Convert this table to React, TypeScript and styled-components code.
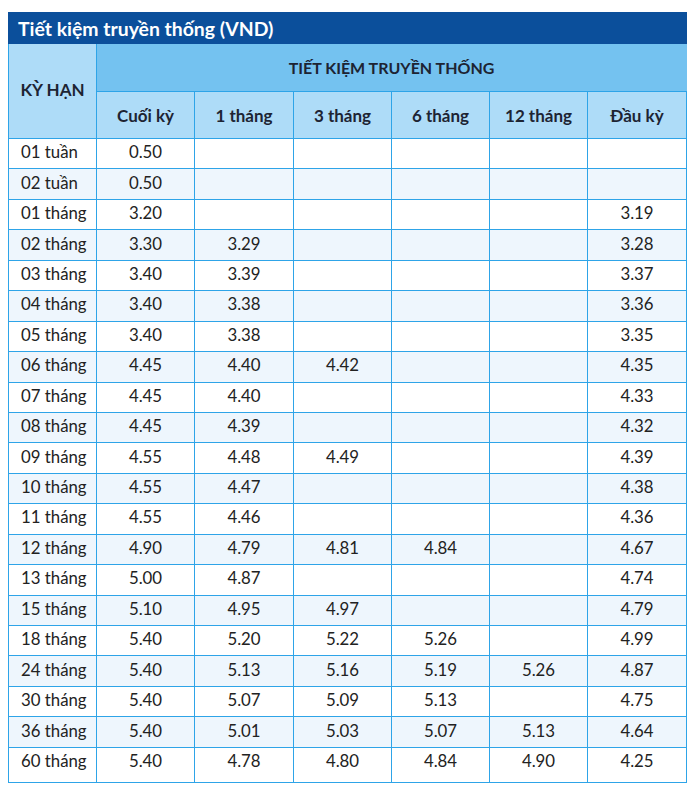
import React from "react";
import styled, { createGlobalStyle } from "styled-components";

const Global = createGlobalStyle`
  html, body { margin: 0; padding: 0; background: #ffffff; }
  body { font-family: "Lato", "Noto Sans", sans-serif; color: #222; }
`;

const Page = styled.div`
  padding: 12px 14px 12px 8px;
`;

const Table = styled.table`
  width: 678px;
  border-collapse: collapse;
  table-layout: fixed;
`;

const TitleCell = styled.th`
  background: #0b4f9b;
  color: #fff;
  font-size: 19.4px;
  font-weight: 700;
  text-align: left;
  height: 30px;
  padding: 0 0 0 9px;
  border: 1px solid #0b4f9b;
`;

const HeadCell = styled.th<{ $tone: "dark" | "light"; $shift?: number }>`
  background: ${(p) => (p.$tone === "dark" ? "#74c2f0" : "#aedcf8")};
  color: #1d2433;
  font-size: ${(p) => (p.$tone === "dark" ? "16px" : "17px")};
  font-weight: 700;
  text-align: center;
  padding: 0 0 ${(p) => p.$shift ?? 0}px;
  border: 1px solid #2ea4e8;
  ${(p) => (p.$tone === "dark" ? "border-top-color: #74c2f0; border-right-color: #74c2f0;" : "")}
`;

const HeadRow = styled.tr<{ $h: number }>`
  height: ${(p) => p.$h}px;
`;

const BodyRow = styled.tr<{ $alt: boolean; $last: boolean }>`
  height: ${(p) => (p.$last ? 35 : 30.45)}px;
  background: ${(p) => (p.$alt ? "#eef6fd" : "#ffffff")};
`;

const Cell = styled.td<{ $first?: boolean; $last?: boolean }>`
  border: 1px solid #2ea4e8;
  font-size: 16.8px;
  color: #222;
  padding: ${(p) => (p.$last ? "0 0 8px" : "0 0 4px")};
  text-align: ${(p) => (p.$first ? "left" : "center")};
  padding-left: ${(p) => (p.$first ? "12px" : "0")};
  vertical-align: middle;
  white-space: nowrap;
`;

const cols = [88, 98, 99, 98, 98, 98, 99];

const rows: [string, string[]][] = [
  ["01 tuần", ["0.50", "", "", "", "", ""]],
  ["02 tuần", ["0.50", "", "", "", "", ""]],
  ["01 tháng", ["3.20", "", "", "", "", "3.19"]],
  ["02 tháng", ["3.30", "3.29", "", "", "", "3.28"]],
  ["03 tháng", ["3.40", "3.39", "", "", "", "3.37"]],
  ["04 tháng", ["3.40", "3.38", "", "", "", "3.36"]],
  ["05 tháng", ["3.40", "3.38", "", "", "", "3.35"]],
  ["06 tháng", ["4.45", "4.40", "4.42", "", "", "4.35"]],
  ["07 tháng", ["4.45", "4.40", "", "", "", "4.33"]],
  ["08 tháng", ["4.45", "4.39", "", "", "", "4.32"]],
  ["09 tháng", ["4.55", "4.48", "4.49", "", "", "4.39"]],
  ["10 tháng", ["4.55", "4.47", "", "", "", "4.38"]],
  ["11 tháng", ["4.55", "4.46", "", "", "", "4.36"]],
  ["12 tháng", ["4.90", "4.79", "4.81", "4.84", "", "4.67"]],
  ["13 tháng", ["5.00", "4.87", "", "", "", "4.74"]],
  ["15 tháng", ["5.10", "4.95", "4.97", "", "", "4.79"]],
  ["18 tháng", ["5.40", "5.20", "5.22", "5.26", "", "4.99"]],
  ["24 tháng", ["5.40", "5.13", "5.16", "5.19", "5.26", "4.87"]],
  ["30 tháng", ["5.40", "5.07", "5.09", "5.13", "", "4.75"]],
  ["36 tháng", ["5.40", "5.01", "5.03", "5.07", "5.13", "4.64"]],
  ["60 tháng", ["5.40", "4.78", "4.80", "4.84", "4.90", "4.25"]],
];

const subHeads = ["Cuối kỳ", "1 tháng", "3 tháng", "6 tháng", "12 tháng", "Đầu kỳ"];

export default function App() {
  return (
    <Page>
      <Global />
      <Table>
        <colgroup>
          {cols.map((w, i) => (
            <col key={i} style={{ width: w }} />
          ))}
        </colgroup>
        <thead>
          <tr>
            <TitleCell colSpan={7}>Tiết kiệm truyền thống (VND)</TitleCell>
          </tr>
          <HeadRow $h={48}>
            <HeadCell $tone="light" $shift={3} rowSpan={2}>
              KỲ HẠN
            </HeadCell>
            <HeadCell $tone="dark" colSpan={6}>
              TIẾT KIỆM TRUYỀN THỐNG
            </HeadCell>
          </HeadRow>
          <HeadRow $h={47}>
            {subHeads.map((h) => (
              <HeadCell key={h} $tone="light">
                {h}
              </HeadCell>
            ))}
          </HeadRow>
        </thead>
        <tbody>
          {rows.map(([term, vals], i) => {
            const last = i === rows.length - 1;
            return (
              <BodyRow key={term} $alt={i % 2 === 1} $last={last}>
                <Cell $first $last={last}>{term}</Cell>
                {vals.map((v, j) => (
                  <Cell key={j} $last={last}>{v}</Cell>
                ))}
              </BodyRow>
            );
          })}
        </tbody>
      </Table>
    </Page>
  );
}
